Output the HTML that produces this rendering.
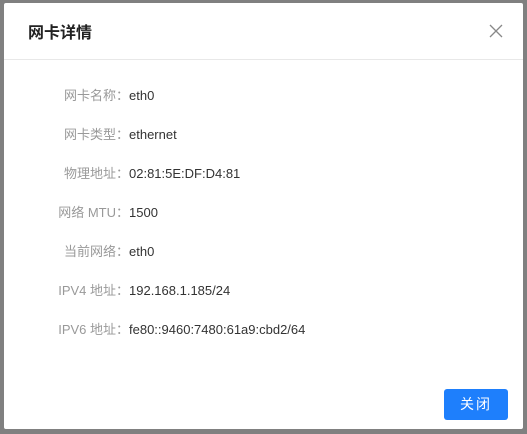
<!DOCTYPE html>
<html><head><meta charset="utf-8"><style>
body{margin:0;width:527px;height:434px;background:#808080;position:relative;overflow:hidden;font-family:"Liberation Sans","Noto Sans CJK SC",sans-serif}
.dlg{position:absolute;left:4px;top:3px;width:519px;height:426px;background:#fff;border-radius:2px}
.title{position:absolute;left:24px;top:20px;font-size:16px;font-weight:bold;color:#222;line-height:22px}
.hr{position:absolute;left:0;right:0;top:56px;height:1px;background:#e8e8e8}
.row{position:absolute;left:0;font-size:13px;line-height:18px;white-space:nowrap}
.l{display:inline-block;width:125px;text-align:right;color:#999}
.v{color:#333}
.btn{position:absolute;left:440px;top:386px;width:64px;height:31px;background:#1e7ffc;border-radius:3px;color:#fff;font-size:14px;text-align:center;line-height:31px;letter-spacing:2px}
</style></head><body>
<div class="dlg">
<div class="title">网卡详情</div>
<svg style="position:absolute;left:485px;top:21px" width="14" height="14" viewBox="0 0 14 14"><path d="M1 1L13 13M13 1L1 13" stroke="#888" stroke-width="1.3"/></svg>
<div class="hr"></div>
<div class="row" style="top:84px"><span class="l">网卡名称：</span><span class="v">eth0</span></div>
<div class="row" style="top:123px"><span class="l">网卡类型：</span><span class="v">ethernet</span></div>
<div class="row" style="top:162px"><span class="l">物理地址：</span><span class="v">02:81:5E:DF:D4:81</span></div>
<div class="row" style="top:201px"><span class="l">网络 MTU：</span><span class="v">1500</span></div>
<div class="row" style="top:240px"><span class="l">当前网络：</span><span class="v">eth0</span></div>
<div class="row" style="top:279px"><span class="l">IPV4 地址：</span><span class="v">192.168.1.185/24</span></div>
<div class="row" style="top:318px"><span class="l">IPV6 地址：</span><span class="v">fe80::9460:7480:61a9:cbd2/64</span></div>
<div class="btn">关闭</div>
</div>
</body></html>
